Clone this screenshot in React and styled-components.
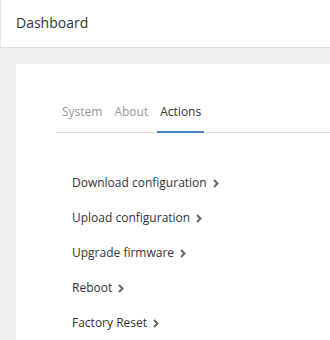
import React from 'react'
import styled, { createGlobalStyle } from 'styled-components'

const Global = createGlobalStyle`
  html, body {
    margin: 0;
    background: #f0f0f0;
    font-family: "Open Sans", "Liberation Sans", sans-serif;
    overflow: hidden;
  }
`

const Page = styled.div`
  width: 330px;
  height: 340px;
  background: #f0f0f0;
  overflow: hidden;
`

const Header = styled.header`
  height: 48px;
  background: #fff;
  border-bottom: 1px solid #dcdcdc;
  border-left: 1px solid #e6e6e6;
  display: flex;
  align-items: center;
  padding-left: 15px;
  padding-bottom: 2px;
  box-sizing: border-box;
  font-size: 14px;
  color: #333;
`

const Card = styled.div`
  margin: 16px 0 0 16px;
  background: #fff;
  height: 300px;
  padding: 38px 0 0 40px;
`

const Tabs = styled.div`
  display: flex;
  border-bottom: 1px solid #ddd;
  padding-left: 3px;
  gap: 6px;
`

const Tab = styled.div`
  font-size: 12px;
  padding: 1px 3px 11px;
  color: ${props => (props.active ? '#333' : '#999')};
  border-bottom: 2px solid ${props => (props.active ? '#4a7fc1' : 'transparent')};
  margin-bottom: -1px;
`

const Actions = styled.div`
  display: flex;
  flex-direction: column;
  padding: 41px 0 0 16px;
  gap: 17px;
`

const Action = styled.div`
  display: flex;
  align-items: center;
  gap: 6px;
  font-size: 12px;
  line-height: 18px;
  color: #333;
`

const Chevron = () => (
  <svg width="6" height="9" viewBox="0 0 6 9">
    <path d="M1 1 L4.5 4.5 L1 8" fill="none" stroke="#666" strokeWidth="2" />
  </svg>
)

const ITEMS = ['Download configuration', 'Upload configuration', 'Upgrade firmware', 'Reboot', 'Factory Reset']

export default function App() {
  return (
    <Page>
      <Global />
      <Header>Dashboard</Header>
      <Card>
        <Tabs>
          <Tab>System</Tab>
          <Tab>About</Tab>
          <Tab active>Actions</Tab>
        </Tabs>
        <Actions>
          {ITEMS.map(item => (
            <Action key={item}>
              {item}
              <Chevron />
            </Action>
          ))}
        </Actions>
      </Card>
    </Page>
  )
}
